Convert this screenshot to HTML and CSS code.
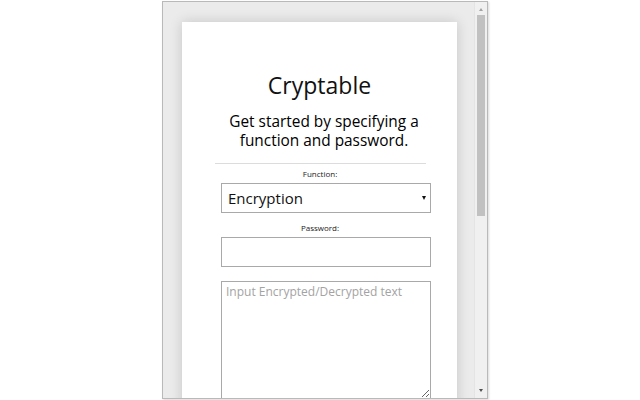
FILE: index.html
```html
<!DOCTYPE html>
<html>
<head>
<meta charset="utf-8">
<link rel="stylesheet" href="styles.css">
</head>
<body>
<div class="page">
  <div class="window">
    <div class="viewport">
      <div class="card">
        <h1 class="title">Cryptable</h1>
        <p class="subtitle"><span class="line">Get started by specifying a</span><span class="line">function and password.</span></p>
        <hr class="divider">
        <div class="form">
          <label class="label">Function:</label>
          <div class="select-wrap">
            <select class="field select">
              <option>Encryption</option>
              <option>Decryption</option>
            </select>
            <span class="arrow"></span>
          </div>
          <label class="label label-pw">Password:</label>
          <input class="field input" type="password">
          <textarea class="text" placeholder="Input Encrypted/Decrypted text"></textarea>
        </div>
      </div>
    </div>
    <div class="scrollbar">
      <span class="sb-up"></span>
      <div class="sb-thumb"></div>
      <div class="sb-fill"></div>
      <span class="sb-down"></span>
    </div>
  </div>
</div>
</body>
</html>
```
FILE: styles.css
```css
html, body {
  margin: 0;
  padding: 0;
  background: #ffffff;
}
body {
  width: 640px;
  height: 400px;
  overflow: hidden;
  font-family: "Open Sans", "Noto Sans", sans-serif;
}
.page {
  padding-left: 162px;
  padding-top: 1px;
}
.window {
  width: 324px;
  height: 396px;
  border: 1px solid #b9b9b9;
  display: flex;
  box-shadow: 1px 1px 2px rgba(0,0,0,0.15);
}
.viewport {
  flex: 1;
  background: #ebebeb;
  overflow: hidden;
  padding-left: 19px;
  padding-top: 20px;
}
.card {
  width: 275px;
  height: 420px;
  background: #ffffff;
  box-shadow: 0 0 12px rgba(0,0,0,0.16);
  padding-top: 48px;
  box-sizing: border-box;
}
.title {
  margin: 0;
  font-weight: normal;
  font-size: 23px;
  line-height: 30px;
  text-align: center;
  color: #111;
}
.subtitle {
  margin: 12px 0 0 0;
  padding-left: 9px;
  font-size: 15.4px;
  text-align: center;
  color: #000;
}
.line {
  display: block;
  height: 19px;
  line-height: 19px;
}
.divider {
  margin: 13px 31px 0 33px;
  border: 0;
  border-top: 1px solid #dcdcdc;
  height: 0;
}
.form {
  margin-left: 39px;
  width: 210px;
  display: flex;
  flex-direction: column;
}
.label {
  display: block;
  font-size: 8px;
  line-height: 10px;
  text-align: center;
  color: #222;
  margin-top: 5px;
  margin-bottom: 4px;
  margin-left: -12px;
}
.label-pw {
  margin-top: 10px;
}
.select-wrap {
  position: relative;
}
.field {
  box-sizing: border-box;
  width: 210px;
  height: 30px;
  border: 1px solid #a9a9a9;
  background: #fff;
  margin: 0;
  outline: none;
  border-radius: 0;
}
.select {
  -webkit-appearance: none;
  appearance: none;
  font-family: "Open Sans", "Noto Sans", sans-serif;
  font-size: 15px;
  padding: 0 0 0 6px;
  color: #111;
}
.arrow {
  position: absolute;
  right: 5px;
  top: 13px;
  width: 0;
  height: 0;
  border-left: 2px solid transparent;
  border-right: 2px solid transparent;
  border-top: 4px solid #111;
}
.text {
  box-sizing: border-box;
  width: 210px;
  height: 118px;
  margin-top: 14px;
  border: 1px solid #a9a9a9;
  padding: 2px 4px;
  font-family: "Open Sans", "Noto Sans", sans-serif;
  font-size: 12px;
  line-height: 16px;
  resize: vertical;
  outline: none;
}
.text::placeholder {
  color: #a3a3a3;
}
.scrollbar {
  width: 12px;
  background: #f0f0f0;
  display: flex;
  flex-direction: column;
  align-items: center;
  border-left: 1px solid #e4e4e4;
}
.sb-up {
  margin-top: 6px;
  width: 0;
  height: 0;
  border-left: 2px solid transparent;
  border-right: 2px solid transparent;
  border-bottom: 3px solid #a3a3a3;
}
.sb-thumb {
  margin-top: 4px;
  width: 8px;
  height: 201px;
  background: #c1c1c1;
}
.sb-fill {
  flex: 1;
}
.sb-down {
  margin-bottom: 6px;
  width: 0;
  height: 0;
  border-left: 2px solid transparent;
  border-right: 2px solid transparent;
  border-top: 3px solid #505050;
}
```
